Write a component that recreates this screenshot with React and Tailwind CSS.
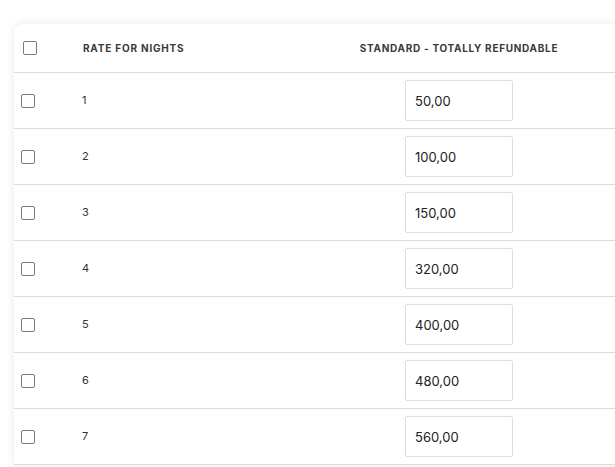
import { useState } from 'react'

const rates = [
  { nights: 1, value: '50,00' },
  { nights: 2, value: '100,00' },
  { nights: 3, value: '150,00' },
  { nights: 4, value: '320,00' },
  { nights: 5, value: '400,00' },
  { nights: 6, value: '480,00' },
  { nights: 7, value: '560,00' },
]

function Box({ className = '' }) {
  return <span className={`block h-[14px] w-[14px] rounded-[2px] border-[1.5px] border-[#7a7a7a] bg-white ${className}`} />
}

export default function App() {
  const [values, setValues] = useState(rates.map((r) => r.value))

  return (
    <div className="h-[467px] w-[615px] overflow-hidden bg-white pl-[14px] pt-[24px] font-['Inter',sans-serif] text-[#333]">
      <div className="w-[700px] rounded-tl-[9px] bg-white shadow-[0_0_10px_rgba(0,0,0,0.09)]">
        <div className="flex h-[49px] items-center border-b border-[#dcdcdc]">
          <div className="w-[69px] pl-[9px]">
            <Box />
          </div>
          <div className="w-[220px] text-[10px] font-bold tracking-[0.08em] text-[#3a3a3a]">RATE FOR NIGHTS</div>
          <div className="w-[312px] text-center text-[10px] font-bold tracking-[0.07em] text-[#3a3a3a]">
            STANDARD - TOTALLY REFUNDABLE
          </div>
        </div>
        {rates.map((r, i) => (
          <div key={r.nights} className="flex h-[56px] items-center border-b border-[#dcdcdc]">
            <div className="w-[68px] pl-[7px]">
              <Box />
            </div>
            <div className="w-[221px] text-[11px] text-[#333]">{r.nights}</div>
            <div className="flex w-[312px] justify-center">
              <input
                value={values[i]}
                onChange={(e) => setValues((prev) => prev.map((v, j) => (j === i ? e.target.value : v)))}
                className="h-[41px] w-[108px] rounded-[2px] border border-[#dedede] px-[9px] text-[13px] text-[#222] outline-none"
              />
            </div>
          </div>
        ))}
      </div>
    </div>
  )
}
